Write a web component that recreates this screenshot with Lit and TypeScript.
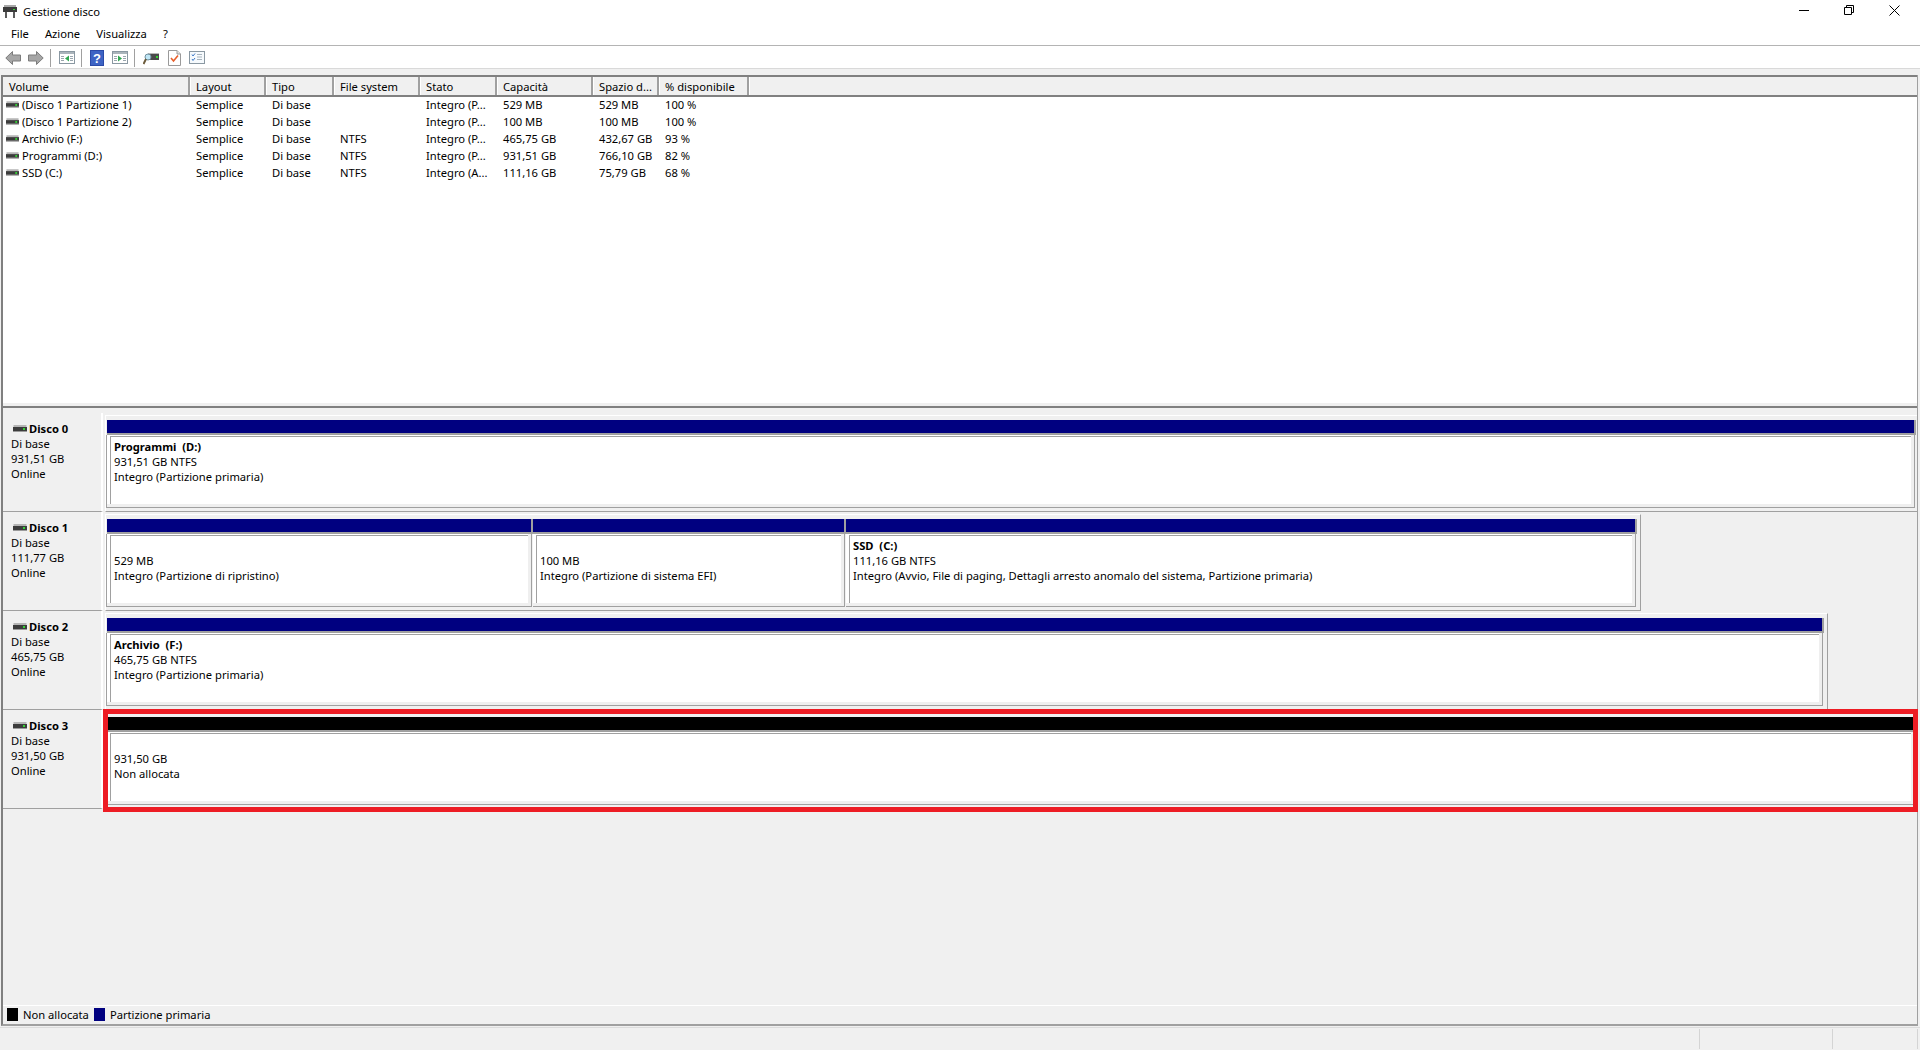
import { LitElement, html, css, svg } from "lit";
import { customElement } from "lit/decorators.js";

const COLS = [187, 76, 68, 86, 77, 96, 66, 90];
const HEAD = ["Volume", "Layout", "Tipo", "File system", "Stato", "Capacità", "Spazio d...", "% disponibile"];
const ROWS = [
  ["(Disco 1 Partizione 1)", "Semplice", "Di base", "", "Integro (P...", "529 MB", "529 MB", "100 %"],
  ["(Disco 1 Partizione 2)", "Semplice", "Di base", "", "Integro (P...", "100 MB", "100 MB", "100 %"],
  ["Archivio (F:)", "Semplice", "Di base", "NTFS", "Integro (P...", "465,75 GB", "432,67 GB", "93 %"],
  ["Programmi (D:)", "Semplice", "Di base", "NTFS", "Integro (P...", "931,51 GB", "766,10 GB", "82 %"],
  ["SSD (C:)", "Semplice", "Di base", "NTFS", "Integro (A...", "111,16 GB", "75,79 GB", "68 %"],
];
const DISKS = [
  { name: "Disco 0", size: "931,51 GB", width: 1812, full: true, parts: [
    { w: 0, bold: "Programmi  (D:)", l1: "931,51 GB NTFS", l2: "Integro (Partizione primaria)" } ] },
  { name: "Disco 1", size: "111,77 GB", width: 1536, full: false, parts: [
    { w: 427, bold: "", l1: "529 MB", l2: "Integro (Partizione di ripristino)" },
    { w: 313, bold: "", l1: "100 MB", l2: "Integro (Partizione di sistema EFI)" },
    { w: 0, bold: "SSD  (C:)", l1: "111,16 GB NTFS", l2: "Integro (Avvio, File di paging, Dettagli arresto anomalo del sistema, Partizione primaria)" } ] },
  { name: "Disco 2", size: "465,75 GB", width: 1723, full: false, parts: [
    { w: 0, bold: "Archivio  (F:)", l1: "465,75 GB NTFS", l2: "Integro (Partizione primaria)" } ] },
  { name: "Disco 3", size: "931,50 GB", width: 1812, full: true, unalloc: true, parts: [
    { w: 0, bold: "", l1: "931,50 GB", l2: "Non allocata" } ] },
];

const driveIcon = html`<svg class="drive" width="14" height="7" viewBox="0 0 14 7">
  <rect x="0.5" y="0" width="13" height="2" fill="#b5b5b5"/>
  <rect x="0" y="2" width="14" height="4" fill="#3c3c3c"/>
  <rect x="0" y="6" width="14" height="1" fill="#9a9a9a"/>
  <rect x="10" y="3" width="2" height="2" fill="#35d535"/>
</svg>`;

const windowPane = (arrow: unknown) => svg`
  <rect x="0.5" y="0.5" width="15" height="12" fill="#fff" stroke="#8a98a2"/>
  <rect x="1" y="1" width="14" height="2" fill="#aab4bb"/>
  <rect x="2" y="5" width="3" height="1" fill="#9aa6ae"/><rect x="2" y="7" width="3" height="1" fill="#9aa6ae"/><rect x="2" y="9" width="3" height="1" fill="#9aa6ae"/>
  <rect x="11" y="5" width="3" height="1" fill="#9aa6ae"/><rect x="11" y="7" width="3" height="1" fill="#9aa6ae"/><rect x="11" y="9" width="3" height="1" fill="#9aa6ae"/>
  ${arrow}`;

@customElement("app-root")
export class AppRoot extends LitElement {
  static styles = css`
    :host { display: flex; flex-direction: column; width: 1920px; height: 1050px; background: #f0f0f0; overflow: hidden;
      font: 11.2px/15px "Noto Sans", "Liberation Sans", sans-serif; color: #000; }
    svg { display: block; flex: none; }
    .title { height: 23px; background: #fff; display: flex; align-items: center; padding-left: 2px; flex: none; }
    .title .name { margin-left: 5px; flex: 1; }
    .winbtns { display: flex; align-items: center; gap: 35px; padding-right: 20px; margin-top: -3px; }
    .menu { height: 21px; padding-bottom: 1px; background: #fff; display: flex; align-items: center; padding-left: 11px; gap: 16px; flex: none; border-bottom: 1px solid #b4b4b4; }
    .toolbar { height: 21px; padding-top: 1px; background: #fff; display: flex; align-items: center; padding-left: 5px; flex: none; border-bottom: 1px solid #d9d9d9; }
    .sep { width: 1px; height: 18px; background: #a0a0a0; margin: 0 8px 0 6px; }
    .tool { margin-right: 7px; }
    .tool.flush { margin-right: 0; }
    .tool.wide { margin-right: 9px; }
    .tool.mid { margin-right: 8px; }
    .frame { margin: 6px 2px 0 1px; flex: 1; min-height: 0; display: flex; flex-direction: column;
      border-left: 2px solid #808080; border-right: 1px solid #a0a0a0; border-bottom: 2px solid #a0a0a0; }
    .list { height: 329px; flex: none; background: #fff; border-top: 2px solid #808080; display: flex; flex-direction: column;
      border-bottom: 2px solid #808080; box-shadow: inset 0 -3px 0 #f0f0f0; }
    .head { display: flex; height: 18px; background: #f0f0f0; border-bottom: 2px solid #808080; flex: none; }
    .head .c { padding-left: 6px; border-right: 2px solid #a0a0a0; box-shadow: 1px 0 0 #fff; line-height: 20px; box-sizing: border-box; white-space: nowrap; overflow: hidden; }
    .head .rest { flex: 1; }
    .rows { margin-top: -1px; }
    .row { display: flex; height: 17px; line-height: 17px; }
    .row .c { padding-left: 6px; box-sizing: border-box; white-space: nowrap; }
    .row .c:first-child { padding-left: 3px; display: flex; align-items: center; gap: 3px; }
    .row .drive { width: 13px; }
    .split { height: 5px; flex: none; }
    .disks { flex: 1; min-height: 0; }
    .disk { height: 99px; display: flex; position: relative; }
    .label { width: 100px; padding: 8px 0 0 8px; box-sizing: border-box; flex: none; border-right: 2px solid #fff; border-bottom: 1px solid #a0a0a0; }
    .label .h { display: flex; align-items: center; gap: 2px; font-weight: 700; padding-left: 2px; }
    .lane { flex: 1; padding: 2px 0 0 2px; min-width: 0; }
    .outer { height: 97px; box-sizing: border-box; border-top: 1px solid #fff; border-left: 1px solid #fff; border-bottom: 1px solid #a0a0a0; border-right: 1px solid #a0a0a0; padding: 4px 3px 0 0; }
    .outer.full { border-right: 0; padding-right: 1px; }
    .parts { height: 88px; display: flex; }
    .part { flex: 1; min-width: 0; display: flex; flex-direction: column; }
    .part.fixed { flex: none; }
    .part:first-child .bar { margin-left: 1px; }
    .part:first-child .body { border-left: 1px solid #a0a0a0; }
    .bar { height: 13px; background: #000080; border-right: 2px solid #a0a0a0; border-bottom: 2px solid #a0a0a0; flex: none; }
    .unalloc .bar { background: #000; }
    .body { flex: 1; min-height: 0; background: #fff; padding: 1px 3px 0 3px; display: flex; border-right: 1px solid #a0a0a0; border-bottom: 1px solid #a0a0a0; margin-right: 1px; box-shadow: inset -3px -3px 0 #efefef; }
    .inner { flex: 1; min-width: 0; border-top: 1px solid #a0a0a0; border-left: 1px solid #a0a0a0; padding: 2px 0 0 3px; margin-bottom: 3px; white-space: nowrap; overflow: hidden; }
    .inner .b { font-weight: 700; height: 15px; white-space: pre; }
    .inner .v { height: 15px; }
    .highlight { position: absolute; left: 100px; top: -1px; right: -1px; bottom: -3px; border: 5px solid #ed1c24; pointer-events: none; }
    .legend { height: 17px; padding-bottom: 1px; flex: none; border-top: 1px solid #fff; display: flex; align-items: center; padding-left: 4px; }
    .sw { width: 11px; height: 13px; margin-right: 5px; }
    .sw.black { background: #000; }
    .sw.navy { background: #000080; }
    .legend span { margin-right: 5px; }
    .status { height: 23px; flex: none; margin-top: 1px; border-top: 1px solid #dcdcdc; display: flex; justify-content: flex-end; box-sizing: border-box; padding: 1px 2px 1px 0; }
    .status i { border-left: 1px solid #d4d4d4; display: block; }
  `;

  private tools() {
    return html`
      <svg class="tool" width="16" height="14" viewBox="0 0 16 14"><path d="M7.500.5 .8 7l6.700 6.500V10H15.500V4H7.500z" fill="#a6a6a6" stroke="#7c7c7c"/></svg>
      <svg class="tool flush" width="16" height="14" viewBox="0 0 16 14"><path d="M8.500.5 15.200 7l-6.700 6.500V10H.5V4h8z" fill="#a6a6a6" stroke="#7c7c7c"/></svg>
      <div class="sep"></div>
      <svg class="tool flush" width="16" height="13" viewBox="0 0 16 13">${windowPane(svg`<path d="M10 4.500v6L6 7.500z" fill="#2fa84f"/>`)}</svg>
      <div class="sep"></div>
      <svg class="tool mid" width="14" height="16" viewBox="0 0 14 16"><rect width="14" height="16" fill="#2b4aa8"/><rect x="1" y="1" width="12" height="14" fill="#3d63c4"/><text x="7" y="13" text-anchor="middle" font-family="Liberation Sans" font-size="13" font-weight="700" fill="#fff">?</text></svg>
      <svg class="tool flush" width="16" height="13" viewBox="0 0 16 13">${windowPane(svg`<path d="M6 4.500v6l4-3z" fill="#2fa84f"/>`)}</svg>
      <div class="sep"></div>
      <svg class="tool wide" width="16" height="14" viewBox="0 0 16 14"><rect x="5" y="3" width="11" height="6" fill="#4a4a4a"/><rect x="5" y="2" width="11" height="1" fill="#b8b8b8"/><rect x="13" y="5" width="2" height="2" fill="#35d535"/><circle cx="5" cy="6" r="3" fill="#bfe6f5" stroke="#6f8f9f"/><path d="M3 8 .5 13" stroke="#6b5a3a" stroke-width="2"/></svg>
      <svg class="tool mid" width="13" height="16" viewBox="0 0 13 16"><path d="M.5.5H9L12.500 4v11.500H.5z" fill="#fff" stroke="#9a9a9a"/><path d="M9 .5V4h3.500" fill="#e6e6e6" stroke="#9a9a9a"/><path d="m3 8 2.500 3L10 5.500" fill="none" stroke="#e8602c" stroke-width="1.600"/></svg>
      <svg width="16" height="13" viewBox="0 0 16 13"><rect x=".5" y=".5" width="15" height="12" fill="#f6fafd" stroke="#8a98a2"/><path d="M3 3.500 4 5l2-2.500M3 8l1 1.500 2-2.500" fill="none" stroke="#3c79c8"/><path d="M8 3.500h5M8 6h5M8 8.500h5" stroke="#a8b4bd"/></svg>
    `;
  }

  render() {
    return html`
      <div class="title">
        <svg width="16" height="15" viewBox="0 0 16 15">
          <rect x="2" y="1" width="12" height="2" fill="#a8a8a8"/><rect x="1" y="3" width="14" height="5" fill="#3c3c3c"/>
          <rect x="11" y="5" width="2" height="1" fill="#35d535"/><rect x="3" y="8" width="2" height="6" fill="#5a5a5a"/><rect x="11" y="8" width="2" height="6" fill="#5a5a5a"/>
        </svg>
        <div class="name">Gestione disco</div>
        <div class="winbtns">
          <svg width="10" height="10" viewBox="0 0 10 10"><path d="M0 5.500h10" stroke="#000"/></svg>
          <svg width="10" height="10" viewBox="0 0 10 10"><path d="M.5 2.500h7v7h-7zM2.500 2.500v-2h7v7h-2" fill="none" stroke="#000"/></svg>
          <svg width="11" height="11" viewBox="0 0 11 11"><path d="M.5.500l10 10M10.500.500l-10 10" stroke="#000"/></svg>
        </div>
      </div>
      <div class="menu"><span>File</span><span>Azione</span><span>Visualizza</span><span>?</span></div>
      <div class="toolbar">${this.tools()}</div>
      <div class="frame">
        <div class="list">
          <div class="head">
            ${HEAD.map((h, i) => html`<div class="c" style="width:${COLS[i]}px">${h}</div>`)}
            <div class="rest"></div>
          </div>
          <div class="rows">
            ${ROWS.map(r => html`<div class="row">
              ${r.map((t, i) => i === 0
                ? html`<div class="c" style="width:${COLS[i]}px">${driveIcon}<span>${t}</span></div>`
                : html`<div class="c" style="width:${COLS[i]}px">${t}</div>`)}
            </div>`)}
          </div>
        </div>
        <div class="split"></div>
        <div class="disks">
          ${DISKS.map(d => html`<div class="disk ${d.unalloc ? "unalloc" : ""}">
            <div class="label">
              <div class="h">${driveIcon}<span>${d.name}</span></div>
              <div>Di base</div><div>${d.size}</div><div>Online</div>
            </div>
            <div class="lane">
              <div class="outer ${d.full ? "full" : ""}" style="width:${d.width}px">
                <div class="parts">
                ${d.parts.map(p => html`<div class="part ${p.w ? "fixed" : ""}" style="${p.w ? `width:${p.w}px` : ""}">
                  <div class="bar"></div>
                  <div class="body"><div class="inner">
                    <div class="b">${p.bold}</div>
                    <div class="v">${p.l1}</div>
                    <div class="v">${p.l2}</div>
                  </div></div>
                </div>`)}
                </div>
              </div>
            </div>
            ${d.unalloc ? html`<div class="highlight"></div>` : ""}
          </div>`)}
        </div>
        <div class="legend">
          <div class="sw black"></div><span>Non allocata</span>
          <div class="sw navy"></div><span>Partizione primaria</span>
        </div>
      </div>
      <div class="status">
        <i style="width:132px"></i><i style="width:84px"></i><i style="width:0"></i>
      </div>
    `;
  }
}
